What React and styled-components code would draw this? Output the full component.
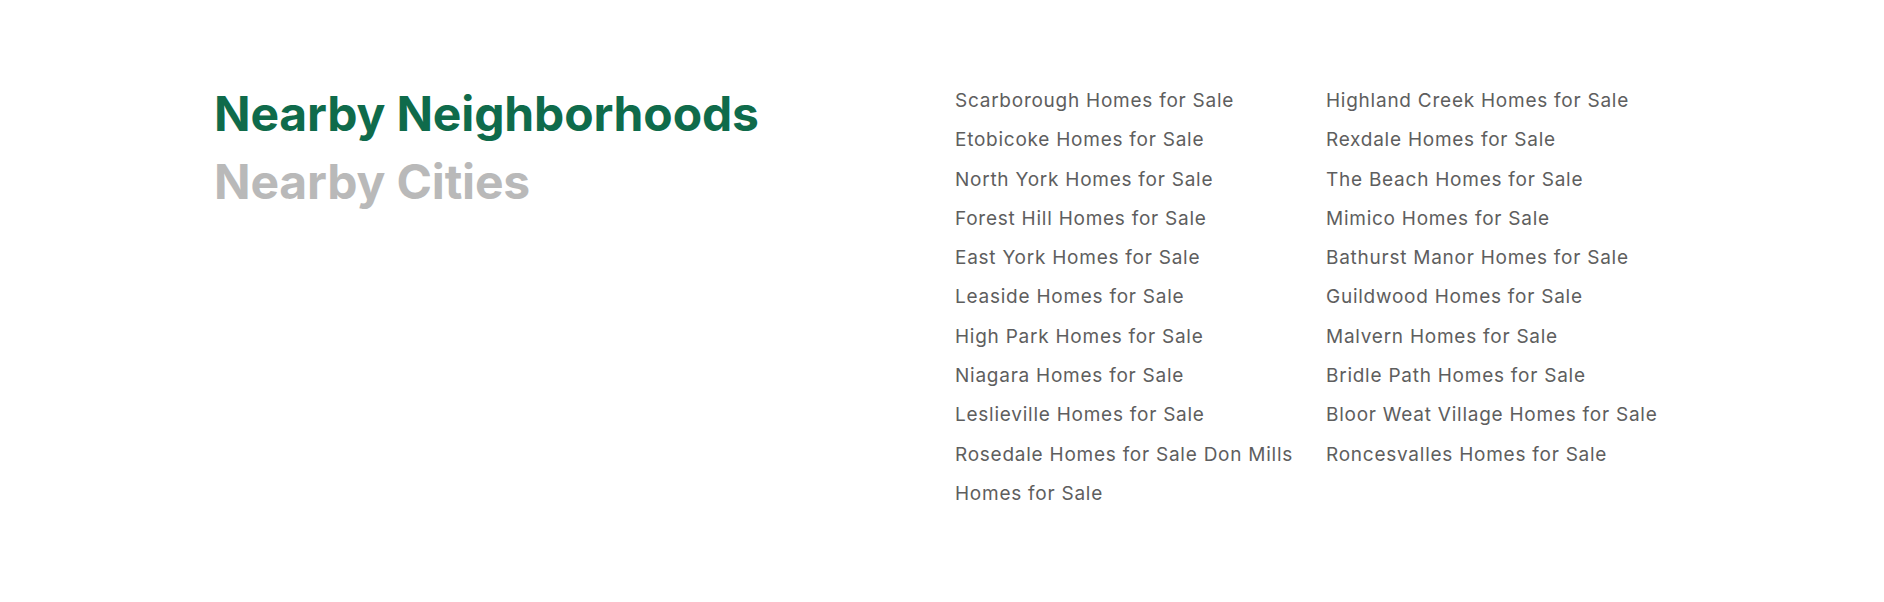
import React from "react";
import styled, { createGlobalStyle } from "styled-components";

const neighborhoods = [
  "Scarborough",
  "Etobicoke",
  "North York",
  "Forest Hill",
  "East York",
  "Leaside",
  "High Park",
  "Niagara",
  "Leslieville",
  "Rosedale Homes for Sale Don Mills",
];

const moreNeighborhoods = [
  "Highland Creek",
  "Rexdale",
  "The Beach",
  "Mimico",
  "Bathurst Manor",
  "Guildwood",
  "Malvern",
  "Bridle Path",
  "Bloor Weat Village",
  "Roncesvalles",
];

const GlobalStyle = createGlobalStyle`
  html, body {
    margin: 0;
    padding: 0;
    background: #ffffff;
  }
  body {
    font-family: Inter, "Open Sans", sans-serif;
  }
`;

const Wrapper = styled.section`
  display: grid;
  grid-template-columns: 741px 1fr;
  padding: 80px 214px 0 214px;
  height: 602px;
  box-sizing: border-box;
`;

const Tabs = styled.div`
  display: flex;
  flex-direction: column;
`;

const Tab = styled.h2`
  margin: 0;
  font-family: Inter, sans-serif;
  font-weight: 700;
  font-size: 48px;
  line-height: 68px;
  letter-spacing: -0.15px;
  color: ${(p) => (p.$active ? "#0f6b4b" : "#b9b9b9")};
  cursor: pointer;
`;

const Links = styled.div`
  display: grid;
  grid-template-columns: 350px 350px;
  column-gap: 21px;
  padding-top: 1px;
`;

const Column = styled.ul`
  list-style: none;
  margin: 0;
  padding: 0;
`;

const Item = styled.li`
  font-size: 19px;
  line-height: 39.3px;
  letter-spacing: 0.75px;
  color: #5e5e5e;
`;

const Anchor = styled.a`
  color: inherit;
  text-decoration: none;
`;

const App = () => {
  return (
    <>
      <GlobalStyle />
      <Wrapper>
        <Tabs>
          <Tab $active>Nearby Neighborhoods</Tab>
          <Tab>Nearby Cities</Tab>
        </Tabs>
        <Links>
          <Column>
            {neighborhoods.map((name) => (
              <Item key={name}>
                <Anchor href="#">{name} Homes for Sale</Anchor>
              </Item>
            ))}
          </Column>
          <Column>
            {moreNeighborhoods.map((name) => (
              <Item key={name}>
                <Anchor href="#">{name} Homes for Sale</Anchor>
              </Item>
            ))}
          </Column>
        </Links>
      </Wrapper>
    </>
  );
};

export default App;
